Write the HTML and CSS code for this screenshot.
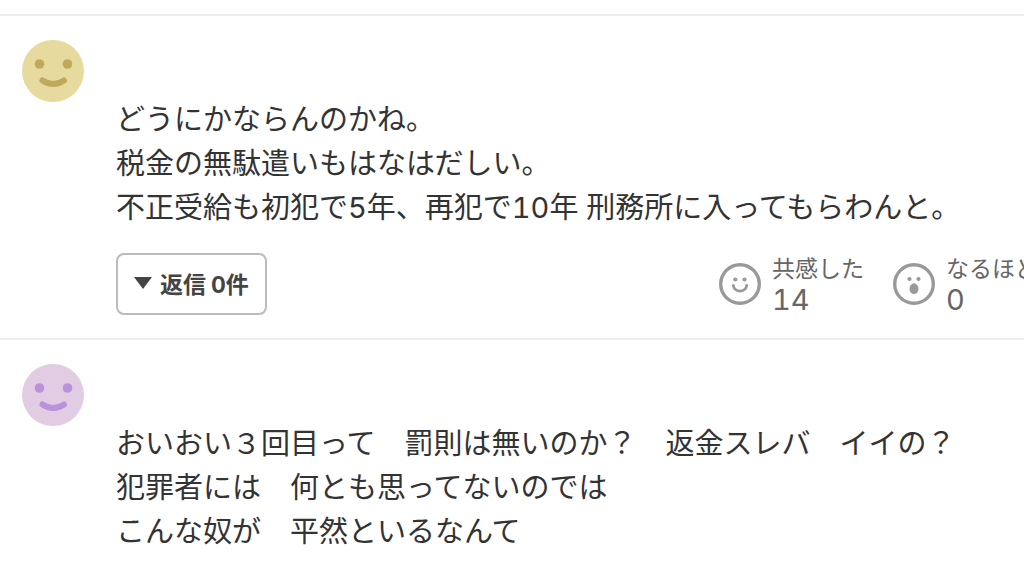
FILE: index.html
```html
<!DOCTYPE html>
<html lang="ja">
<head>
    <meta charset="UTF-8">
    <meta name="viewport" content="width=device-width, initial-scale=1.0">
    <title>コメント</title>
    <link rel="stylesheet" href="styles.css">
</head>
<body>

    <main class="comments">
        <article class="comment">
            <svg class="avatar avatar-yellow" viewBox="0 0 62 62" aria-hidden="true">
                <circle class="face" cx="31" cy="31" r="31"/>
                <circle class="eye" cx="17.5" cy="24" r="4.8"/>
                <circle class="eye" cx="45.5" cy="24" r="4.8"/>
                <path class="mouth" d="M20.5 40.5Q31 47.5 42 40.5"/>
            </svg>
            <div class="comment-body">
                <p class="comment-text">どうにかならんのかね。<br>税金の無駄遣いもはなはだしい。<br>不正受給も初犯で5年、再犯で10年 刑務所に入ってもらわんと。</p>
                <div class="comment-actions">
                    <button type="button" class="reply-button">
                        <svg class="arrow" viewBox="0 0 18 12" aria-hidden="true"><path d="M0 0H18L9 12Z"/></svg>
                        <span>返信</span><span class="reply-count">0件</span>
                    </button>
                    <div class="reactions">
                        <button type="button" class="reaction">
                            <svg class="reaction-icon" viewBox="0 0 42 42" aria-hidden="true">
                                <circle class="line" cx="21" cy="21" r="19.3"/>
                                <circle cx="16.3" cy="16.5" r="2.1"/>
                                <circle cx="25.5" cy="16.5" r="2.1"/>
                                <path class="smile" d="M14.3 22.5C15.5 30 26.5 30 27.7 22.5"/>
                            </svg>
                            <span class="reaction-info">
                                <span class="reaction-label">共感した</span>
                                <span class="reaction-count">14</span>
                            </span>
                        </button>
                        <button type="button" class="reaction">
                            <svg class="reaction-icon" viewBox="0 0 42 42" aria-hidden="true">
                                <circle class="line" cx="21" cy="21" r="19.3"/>
                                <circle cx="16.5" cy="16" r="2.1"/>
                                <circle cx="25.5" cy="16" r="2.1"/>
                                <ellipse cx="21" cy="25.7" rx="4.5" ry="5.4"/>
                            </svg>
                            <span class="reaction-info">
                                <span class="reaction-label">なるほど</span>
                                <span class="reaction-count">0</span>
                            </span>
                        </button>
                    </div>
                </div>
            </div>
        </article>

        <article class="comment">
            <svg class="avatar avatar-purple" viewBox="0 0 62 62" aria-hidden="true">
                <circle class="face" cx="31" cy="31" r="31"/>
                <circle class="eye" cx="17.5" cy="24" r="4.8"/>
                <circle class="eye" cx="45.5" cy="24" r="4.8"/>
                <path class="mouth" d="M20.5 40.5Q31 47.5 42 40.5"/>
            </svg>
            <div class="comment-body">
                <p class="comment-text">おいおい３回目って　罰則は無いのか？　返金スレバ　イイの？<br>犯罪者には　何とも思ってないのでは<br>こんな奴が　平然といるなんて</p>
            </div>
        </article>
    </main>

</body>
</html>
```
FILE: styles.css
```css
* {
    box-sizing: border-box;
}
body {
    margin: 0;
    background: #fff;
    color: #333;
    font-family: Inter, "Noto Sans CJK JP", sans-serif;
    font-variant-numeric: tabular-nums;
}
.comments {
    padding-top: 14px;
    overflow: hidden;
}
.comment {
    display: flex;
    align-items: flex-start;
    gap: 32px;
    padding: 24px 0 23px 22px;
    border-top: 2px solid #eee;
}
.avatar {
    flex: none;
    width: 62px;
    height: 62px;
}
.avatar-yellow {
    fill: #e6da9e;
    color: #c0a95a;
}
.avatar-purple {
    fill: #e2cce3;
    color: #b992da;
}
.eye {
    fill: currentColor;
}
.mouth {
    fill: none;
    stroke: currentColor;
    stroke-width: 6;
    stroke-linecap: round;
}
.comment-body {
    flex: 1;
    padding-top: 58px;
}
.comment-text {
    margin: 0;
    font-size: 29px;
    line-height: 44px;
}
.comment-actions {
    display: flex;
    justify-content: space-between;
    align-items: center;
    margin-top: 23px;
    /* the reactions run past the right edge */
    margin-right: -14px;
}
button {
    padding: 0;
    border: 0;
    background: none;
    font-family: inherit;
    font-variant-numeric: inherit;
    cursor: pointer;
}
.reply-button {
    display: flex;
    align-items: center;
    height: 62px;
    padding: 0 16px 2px;
    border: 2px solid #bbb;
    border-radius: 8px;
    color: #444;
    font-size: 23px;
    font-weight: bold;
}
.arrow {
    width: 18px;
    height: 12px;
    margin-right: 8px;
    fill: currentColor;
}
.reply-count {
    margin-left: 5px;
}
.reactions {
    display: flex;
    gap: 29px;
}
.reaction {
    display: flex;
    align-items: center;
    gap: 11px;
    color: #666;
    text-align: left;
}
.reaction-icon {
    width: 42px;
    height: 42px;
    fill: #999;
}
.line, .smile {
    fill: none;
    stroke: #999;
    stroke-width: 3.4;
}
.smile {
    stroke-width: 2.8;
    stroke-linecap: round;
}
.reaction-info {
    display: flex;
    flex-direction: column;
}
.reaction-label {
    font-size: 23px;
    line-height: 32px;
}
.reaction-count {
    font-size: 29px;
    line-height: 30px;
}
```
